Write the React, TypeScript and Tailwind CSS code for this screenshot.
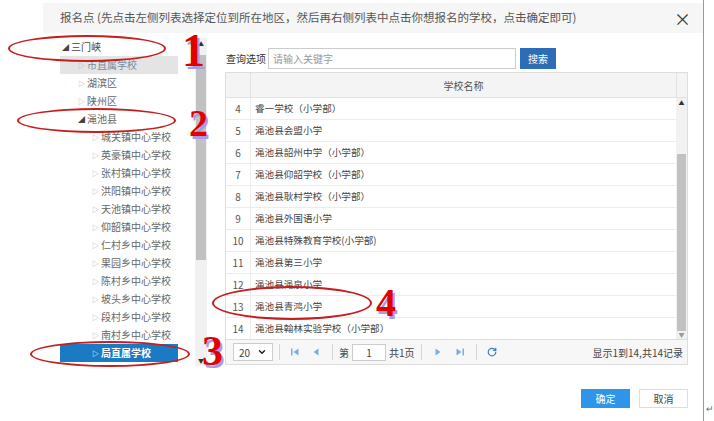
import { ChevronDown, RotateCw } from "lucide-react";

interface TreeItem {
  label: string;
  level: number;
  open?: boolean;
  state?: "hover" | "active";
}

const treeItems: TreeItem[] = [
  { label: "三门峡", level: 0, open: true },
  { label: "市直属学校", level: 1, state: "hover" },
  { label: "湖滨区", level: 1 },
  { label: "陕州区", level: 1 },
  { label: "渑池县", level: 1, open: true },
  { label: "城关镇中心学校", level: 2 },
  { label: "英豪镇中心学校", level: 2 },
  { label: "张村镇中心学校", level: 2 },
  { label: "洪阳镇中心学校", level: 2 },
  { label: "天池镇中心学校", level: 2 },
  { label: "仰韶镇中心学校", level: 2 },
  { label: "仁村乡中心学校", level: 2 },
  { label: "果园乡中心学校", level: 2 },
  { label: "陈村乡中心学校", level: 2 },
  { label: "坡头乡中心学校", level: 2 },
  { label: "段村乡中心学校", level: 2 },
  { label: "南村乡中心学校", level: 2 },
  { label: "局直属学校", level: 2, state: "active" },
  { label: "义马市", level: 1 },
];

const schools = [
  { no: 4, name: "睿一学校（小学部）" },
  { no: 5, name: "渑池县会盟小学" },
  { no: 6, name: "渑池县韶州中学（小学部）" },
  { no: 7, name: "渑池县仰韶学校（小学部）" },
  { no: 8, name: "渑池县耿村学校（小学部）" },
  { no: 9, name: "渑池县外国语小学" },
  { no: 10, name: "渑池县特殊教育学校(小学部)" },
  { no: 11, name: "渑池县第三小学" },
  { no: 12, name: "渑池县渑泉小学" },
  { no: 13, name: "渑池县青鸿小学" },
  { no: 14, name: "渑池县翰林实验学校（小学部）" },
];

const indent = ["pl-[2px]", "pl-[18px]", "pl-[32px]"];

const TreeRow = ({ item }: { item: TreeItem }) => {
  const active = item.state === "active";
  const hover = item.state === "hover";
  return (
    <div
      className={`flex h-[18px] w-[118px] shrink-0 items-center whitespace-nowrap ${indent[item.level]} ${
        active ? "bg-[#1b7ac4] text-white font-bold" : hover ? "bg-[#e4e4e4] text-[#7a8aa0]" : item.level === 0 ? "text-[#444]" : "text-[#666]"
      }`}
    >
      <span className={`w-[9px] shrink-0 text-[7px] ${active ? "text-white" : item.open ? "text-[#444]" : "text-[#aaa]"}`}>
        {item.open ? "◢" : "▷"}
      </span>
      <span className="text-[10px] leading-none">{item.label}</span>
    </div>
  );
};

const Annot = ({ n, cls }: { n: string; cls: string }) => (
  <span
    className={`absolute font-bold leading-none text-[#e00000] [font-family:'Liberation_Serif',serif] [text-shadow:2px_3px_0_#a99ae6] ${cls}`}
  >
    {n}
  </span>
);

const Sep = () => <div className="mx-[6px] h-[16px] w-px bg-[#d6d6d6]" />;

const Tri = ({ dir, bar }: { dir: "l" | "r"; bar?: boolean }) => (
  <svg width="10" height="10" viewBox="0 0 10 10" className="text-[#78aee0]" fill="currentColor">
    {dir === "l" ? (
      <>
        {bar && <rect x="1" y="1.5" width="1.5" height="7" />}
        <polygon points="8.5,1.5 3.5,5 8.5,8.5" />
      </>
    ) : (
      <>
        <polygon points="1.5,1.5 6.5,5 1.5,8.5" />
        {bar && <rect x="7.5" y="1.5" width="1.5" height="7" />}
      </>
    )}
  </svg>
);

export default function App() {
  return (
    <div className="relative flex h-[421px] w-[714px] overflow-hidden bg-white [font-family:'Noto_Sans_CJK_SC','Noto_Sans',sans-serif]">
      <div className="w-[43px] shrink-0" />
      <div className="flex w-[661px] shrink-0 flex-col border-r border-[#9a9a9a] pt-[3px]">
        {/* header */}
        <div className="flex h-[30px] items-center justify-between bg-[#f6f6f6] pl-[17px] pr-[12px]">
          <span className="text-[11.5px] text-[#555]">
            报名点 (先点击左侧列表选择定位到所在地区，然后再右侧列表中点击你想报名的学校，点击确定即可)
          </span>
          <span className="text-[17px] leading-none text-[#333]">×</span>
        </div>

        {/* body */}
        <div className="flex">
          {/* tree */}
          <div className="mt-[5px] flex h-[328px] w-[167px] shrink-0">
            <div className="flex flex-1 flex-col overflow-hidden pl-[17px]">
              {treeItems.map((item) => (
                <TreeRow key={item.label} item={item} />
              ))}
            </div>
            <div className="mr-[3px] flex w-[12px] flex-col items-center bg-[#f1f1f1]">
              <span className="text-[6px] leading-[12px] text-[#333]">▲</span>
              <div className="mt-[5px] h-[205px] w-[10px] bg-[#c1c1c1]" />
              <div className="flex-1" />
              <span className="text-[6px] leading-[10px] text-[#333]">▼</span>
            </div>
          </div>

          {/* right */}
          <div className="ml-[15px] flex w-[463px] flex-col">
            <div className="mt-[15px] flex h-[21px] items-center">
              <span className="w-[43px] shrink-0 whitespace-nowrap pl-[1px] text-[10px] text-[#333]">查询选项</span>
              <div className="flex h-[21px] w-[248px] items-center border border-[#ccc] pl-[4px] text-[10px] text-[#999]">
                请输入关键字
              </div>
              <div className="ml-[4px] flex h-[21px] w-[36px] items-center justify-center bg-[#2d6db5] text-[10px] text-white">
                搜索
              </div>
            </div>

            <div className="mt-[3px] flex flex-col border border-[#ddd]">
              <div className="flex h-[24px] bg-[#f4f4f4] text-[10px] text-[#555]">
                <div className="w-[25px] border-r border-[#e2e2e2]" />
                <div className="flex flex-1 items-center justify-center">学校名称</div>
                <div className="w-[11px] border-l border-[#e2e2e2]" />
              </div>
              <div className="flex h-[242px] border-t border-[#e2e2e2]">
                <div className="flex flex-1 flex-col">
                  {schools.map((s) => (
                    <div key={s.no} className="flex h-[22px] shrink-0 items-center border-b border-[#ececec] text-[9.6px] text-[#444]">
                      <div className="flex h-full w-[25px] items-center justify-center border-r border-[#ececec] text-[10px] text-[#555]">
                        {s.no}
                      </div>
                      <div className="pl-[4px]">{s.name}</div>
                    </div>
                  ))}
                </div>
                <div className="flex w-[11px] flex-col items-center bg-[#f1f1f1]">
                  <span className="text-[6px] leading-[10px] text-[#333]">▲</span>
                  <div className="mt-[46px] h-[178px] w-[9px] bg-[#c1c1c1]" />
                  <div className="flex-1" />
                  <span className="text-[6px] leading-[8px] text-[#999]">▼</span>
                </div>
              </div>
              <div className="flex h-[25px] items-center border-t border-[#ddd] bg-[#f7f7f7] pl-[7px] pr-[4px] text-[10px] text-[#444]">
                <div className="flex h-[18px] w-[40px] items-center justify-between border border-[#ccc] bg-white px-[5px]">
                  <span>20</span>
                  <ChevronDown size={10} strokeWidth={3.5} className="text-[#222]" />
                </div>
                <Sep />
                <div className="mx-[4px]"><Tri dir="l" bar /></div>
                <div className="mx-[6px]"><Tri dir="l" /></div>
                <Sep />
                <span>第</span>
                <div className="mx-[3px] flex h-[17px] w-[34px] items-center justify-center border border-[#ccc] bg-white">1</div>
                <span>共1页</span>
                <Sep />
                <div className="mx-[6px]"><Tri dir="r" /></div>
                <div className="mx-[5px]"><Tri dir="r" bar /></div>
                <Sep />
                <RotateCw size={10} strokeWidth={3} className="ml-[4px] text-[#3a7fc6]" />
                <span className="ml-auto">显示1到14,共14记录</span>
              </div>
            </div>
          </div>
        </div>

        {/* footer */}
        <div className="mt-[23px] flex justify-end gap-[9px] pr-[15px]">
          <div className="flex h-[19px] w-[49px] items-center justify-center bg-[#2e95e8] text-[10px] text-white">确定</div>
          <div className="flex h-[19px] w-[49px] items-center justify-center border border-[#ddd] bg-white text-[10px] text-[#444]">
            取消
          </div>
        </div>
      </div>
      <span className="mt-[402px] ml-[2px] text-[9px] text-[#666]">↵</span>

      {/* annotations */}
      <div className="absolute left-[8px] top-[35px] h-[27px] w-[158px] rounded-[50%] border-2 border-[#c41e1e]" />
      <div className="absolute left-[17px] top-[108px] h-[25px] w-[159px] rounded-[50%] border-2 border-[#c41e1e]" />
      <div className="absolute left-[30px] top-[341px] h-[26px] w-[160px] rounded-[50%] border-2 border-[#c41e1e]" />
      <div className="absolute left-[212px] top-[286px] h-[34px] w-[160px] rounded-[50%] border-2 border-[#c41e1e]" />
      <Annot n="1" cls="left-[182px] top-[28px] text-[46px]" />
      <Annot n="2" cls="left-[189px] top-[104px] text-[38px]" />
      <Annot n="3" cls="left-[202px] top-[330px] text-[42px]" />
      <Annot n="4" cls="left-[376px] top-[283px] text-[40px]" />
    </div>
  );
}
